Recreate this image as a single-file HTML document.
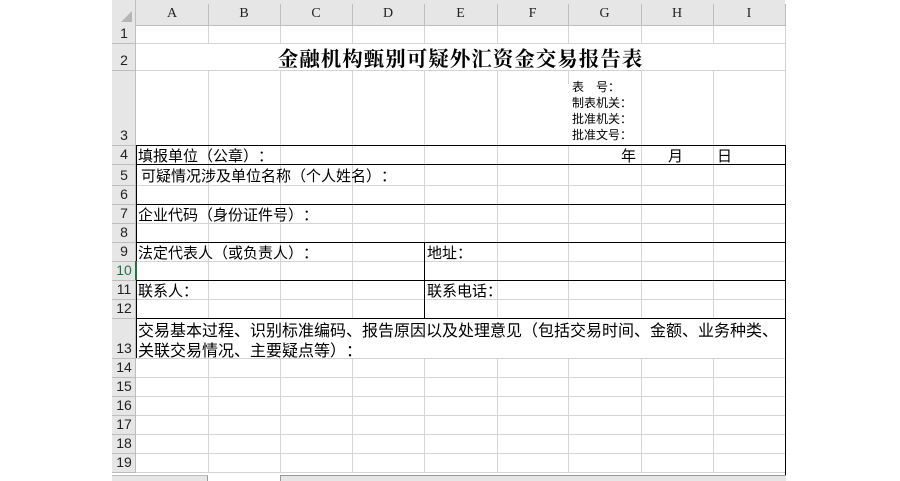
<!DOCTYPE html>
<html><head><meta charset="utf-8">
<style>
*{margin:0;padding:0;box-sizing:border-box}
body{width:900px;height:481px;background:#fff;position:relative;overflow:hidden;font-family:"WenQuanYi Zen Hei","Noto Sans CJK SC",sans-serif;color:#000}
.a{position:absolute}
.hl{position:absolute;height:1px;background:#d4d4d4}
.vl{position:absolute;width:1px;background:#d4d4d4}
.bh{position:absolute;height:1px;background:#000}
.bv{position:absolute;width:1px;background:#000}
.ch{position:absolute;top:0;height:26px;line-height:28px;text-align:center;font-family:"Liberation Serif",serif;font-size:14px;color:#222}
.rh{position:absolute;left:112px;width:24px;text-align:center;font-size:14px;color:#222;font-family:"Liberation Sans",sans-serif}
.t{position:absolute;font-size:15px;white-space:nowrap;line-height:19px}
i{font-style:normal;display:inline-block;width:1em}
i.o{text-align:right}i.c{text-align:left}i.m{text-align:center}
</style></head><body>
<div class="a" style="left:112px;top:0;width:673px;height:26px;background:#e6e6e6;border-bottom:1px solid #bdbdbd"></div>
<div class="a" style="left:112px;top:0;width:24px;height:472px;background:#e6e6e6;border-right:1px solid #bdbdbd"></div>
<div class="a" style="left:121px;top:11px;width:0;height:0;border-left:11px solid transparent;border-bottom:11px solid #b5b5b5"></div>
<div id="g"></div>
<script>
var xs=[136,208,280,352,424,497,568,641,713,785],L="ABCDEFGHI",h="";
for(var i=0;i<9;i++){h+='<div class="ch" style="left:'+xs[i]+'px;width:'+(xs[i+1]-xs[i])+'px">'+L[i]+'</div>';}
for(var i=1;i<10;i++){h+='<div class="vl" style="left:'+xs[i]+'px;top:4px;height:22px;background:#bdbdbd"></div>';}
var ys=[26,43,70,145,164,185,204,223,242,261,280,299,318,358,377,396,415,434,453,472];
for(var r=0;r<19;r++){var y0=ys[r],y1=ys[r+1];h+='<div class="rh" style="top:'+y0+'px;height:'+(y1-y0)+'px;line-height:'+(2*(y1-y0)-19)+'px;'+(r==9?'color:#217346;':'')+'">'+(r+1)+'</div>';
h+='<div class="hl" style="left:112px;width:24px;top:'+y1+'px;background:#bdbdbd"></div>';}
for(var i=1;i<9;i++){var x=xs[i];
 h+='<div class="vl" style="left:'+x+'px;top:26px;height:17px"></div>';
 h+='<div class="vl" style="left:'+x+'px;top:70px;height:'+(x==568?0:75)+'px"></div>';
 h+='<div class="vl" style="left:'+x+'px;top:145px;height:173px"></div>';
 h+='<div class="vl" style="left:'+x+'px;top:358px;height:114px"></div>';}
h+='<div class="vl" style="left:568px;top:70px;height:14px"></div>';
h+='<div class="vl" style="left:785px;top:26px;height:44px"></div><div class="vl" style="left:785px;top:70px;height:75px"></div>';
[43,70,145,185,223,261,299,358,377,396,415,434,453,472].forEach(function(y){h+='<div class="hl" style="left:136px;width:650px;top:'+y+'px"></div>';});
[145,164,204,242,280,318].forEach(function(y){h+='<div class="bh" style="left:136px;width:650px;top:'+y+'px"></div>';});
h+='<div class="bv" style="left:136px;top:145px;height:213px"></div>';
h+='<div class="bv" style="left:785px;top:145px;height:330px"></div>';
h+='<div class="bv" style="left:424px;top:242px;height:76px"></div>';
document.getElementById('g').innerHTML=h;
</script>
<div class="a" style="left:135px;top:261px;width:2px;height:19px;background:#217346"></div>
<div class="a" style="left:136px;top:43px;width:649px;height:27px;line-height:29px;text-align:center;font-family:'Noto Serif CJK SC',serif;font-weight:bold;font-size:20.5px;letter-spacing:1px">金融机构甄别可疑外汇资金交易报告表</div>
<div class="a" style="left:572px;top:79px;font-size:12px;line-height:16px;white-space:nowrap">表　号<i class="c">：</i><br>制表机关<i class="c">：</i><br>批准机关<i class="c">：</i><br>批准文号<i class="c">：</i></div>
<div class="t" style="left:138px;top:146px">填报单位<i class="o">（</i>公章<i class="c">）</i><i class="m">：</i></div>
<div class="t" style="left:621px;top:146px">年</div>
<div class="t" style="left:668px;top:146px">月</div>
<div class="t" style="left:717px;top:146px">日</div>
<div class="t" style="left:141px;top:166px">可疑情况涉及单位名称<i class="o">（</i>个人姓名<i class="c">）</i><i class="m">：</i></div>
<div class="t" style="left:138px;top:205px">企业代码<i class="o">（</i>身份证件号<i class="c">）</i><i class="m">：</i></div>
<div class="t" style="left:138px;top:243px">法定代表人<i class="o">（</i>或负责人<i class="c">）</i><i class="m">：</i></div>
<div class="t" style="left:427px;top:243px">地址<i class="c">：</i></div>
<div class="t" style="left:138px;top:281px">联系人<i class="c">：</i></div>
<div class="t" style="left:427px;top:281px">联系电话<i class="c">：</i></div>
<div class="t" style="left:138px;top:319px;font-size:16px;line-height:20px">交易基本过程、识别标准编码、报告原因以及处理意见<i class="o">（</i>包括交易时间、金额、业务种类、<br>关联交易情况、主要疑点等<i class="c">）</i><i class="m">：</i></div>
<div class="a" style="left:112px;top:475px;width:96px;height:6px;background:#e6e6e6;border-top:1px solid #bdbdbd;border-right:1px solid #999"></div>
<div class="a" style="left:280px;top:475px;width:506px;height:6px;background:#e6e6e6;border-top:1px solid #999;border-left:1px solid #999"></div>
</body></html>
